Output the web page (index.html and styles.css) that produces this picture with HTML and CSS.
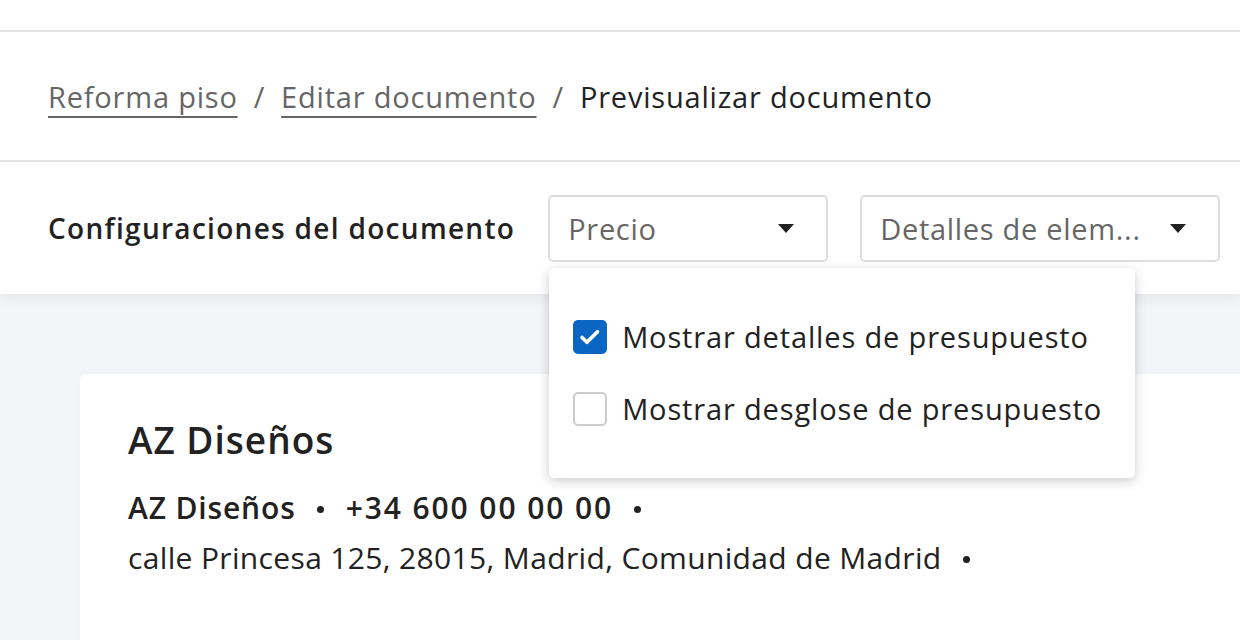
FILE: index.html
```html
<!DOCTYPE html>
<html lang="es">
<head>
    <meta charset="UTF-8">
    <meta name="viewport" content="width=device-width, initial-scale=1.0">
    <title>Previsualizar documento</title>
    <link rel="stylesheet" href="styles.css">
</head>
<body>
    <div class="topbar"></div>

    <nav class="crumbs">
        <a href="#" class="crumb-link">Reforma piso</a>
        <span class="crumb-sep">/</span>
        <a href="#" class="crumb-link">Editar documento</a>
        <span class="crumb-sep">/</span>
        <span class="crumb-current">Previsualizar documento</span>
    </nav>

    <div class="toolbar">
        <span class="toolbar-title">Configuraciones del documento</span>

        <div class="select-wrap">
            <div class="select select-price">
                <span class="select-text">Precio</span>
                <svg class="caret" width="16" height="9" viewBox="0 0 16 9"><path d="M0 0h16L8 9z" fill="#222"/></svg>
            </div>
            <div class="menu">
                <label class="menu-item">
                    <span class="check checked">
                        <svg width="34" height="34" viewBox="0 0 34 34"><path d="M8 17.5l5.5 5.5L25.5 11" fill="none" stroke="#fff" stroke-width="4.2" stroke-linecap="round" stroke-linejoin="round"/></svg>
                    </span>
                    Mostrar detalles de presupuesto
                </label>
                <label class="menu-item">
                    <span class="check"></span>
                    Mostrar desglose de presupuesto
                </label>
            </div>
        </div>

        <div class="select select-details">
            <span class="select-text">Detalles de elem...</span>
            <svg class="caret" width="16" height="9" viewBox="0 0 16 9"><path d="M0 0h16L8 9z" fill="#222"/></svg>
        </div>
    </div>

    <main class="main">
        <section class="card">
            <h1 class="company">AZ Diseños</h1>
            <p class="info info-bold">AZ Diseños<span class="dot"></span><span class="phone">+34 600 00 00 00</span><span class="dot"></span></p>
            <p class="info">calle Princesa 125, 28015, Madrid, Comunidad de Madrid<span class="dot"></span></p>
        </section>
    </main>
</body>
</html>
```

FILE: styles.css
```css
body { margin: 0; font-family: "Open Sans", Lato, sans-serif; color: #222; background: #f3f5f9; overflow: hidden; }

.topbar { height: 30px; background: #fff; border-bottom: 2px solid #e2e2e2; }

.crumbs { height: 128px; background: #fff; border-bottom: 2px solid #e2e2e2; padding: 0 48px; display: flex; align-items: center; font-size: 29px; letter-spacing: 0.8px; gap: 16px; }
.crumb-link { color: #666; text-decoration: underline; text-decoration-thickness: 2px; text-underline-offset: 8px; }
.crumb-sep { color: #666; }
.crumb-current { color: #222; }

.toolbar { position: relative; z-index: 2; height: 132px; background: #fff; padding: 0 48px; display: flex; align-items: center; gap: 32px; box-shadow: 0 6px 10px rgba(0, 0, 0, 0.05); }
.toolbar-title { flex: none; white-space: nowrap; font-size: 28px; font-weight: 600; letter-spacing: 1.3px; margin-right: 1px; }

.select-wrap { position: relative; flex: none; }
.select { flex: none; height: 67px; box-sizing: border-box; border: 2px solid #ddd; border-radius: 5px; background: #fff; display: flex; align-items: center; justify-content: space-between; padding: 0 32px 0 18px; font-size: 29px; letter-spacing: 0.7px; color: #666; white-space: nowrap; }
.select-price { width: 280px; }
.select-details { width: 360px; padding-right: 32px; }
.caret { flex: none; }

.menu { position: absolute; top: 73px; left: 1px; width: 586px; height: 210px; box-sizing: border-box; padding: 51px 24px; background: #fff; border-radius: 5px; box-shadow: 0 3px 12px rgba(0, 0, 0, 0.2); display: flex; flex-direction: column; gap: 36px; }
.menu-item { height: 36px; display: flex; align-items: center; gap: 15px; font-size: 29px; letter-spacing: 0.85px; color: #222; white-space: nowrap; }
.check { width: 34px; height: 34px; box-sizing: border-box; border: 2px solid #ccc; border-radius: 5px; display: flex; align-items: center; justify-content: center; flex: none; }
.check.checked { background: #0b66c3; border-color: #0b66c3; }

.main { padding: 80px 0 0 80px; }
.card { background: #fff; border-radius: 6px 0 0 0; padding: 40px 48px 60px; height: 400px; box-shadow: 0 0 10px rgba(0, 0, 0, 0.03); }
.company { margin: 0 0 18px; font-size: 37px; font-weight: 600; letter-spacing: 1px; }
.info { margin: 0; font-size: 30px; line-height: 50px; letter-spacing: 0.35px; }
.info-bold { font-weight: 600; letter-spacing: 0.85px; }
.phone { letter-spacing: 1.9px; }
.dot { display: inline-block; width: 7px; height: 7px; border-radius: 50%; background: #222; margin: 0 22px 0 21px; vertical-align: 6px; }
```
